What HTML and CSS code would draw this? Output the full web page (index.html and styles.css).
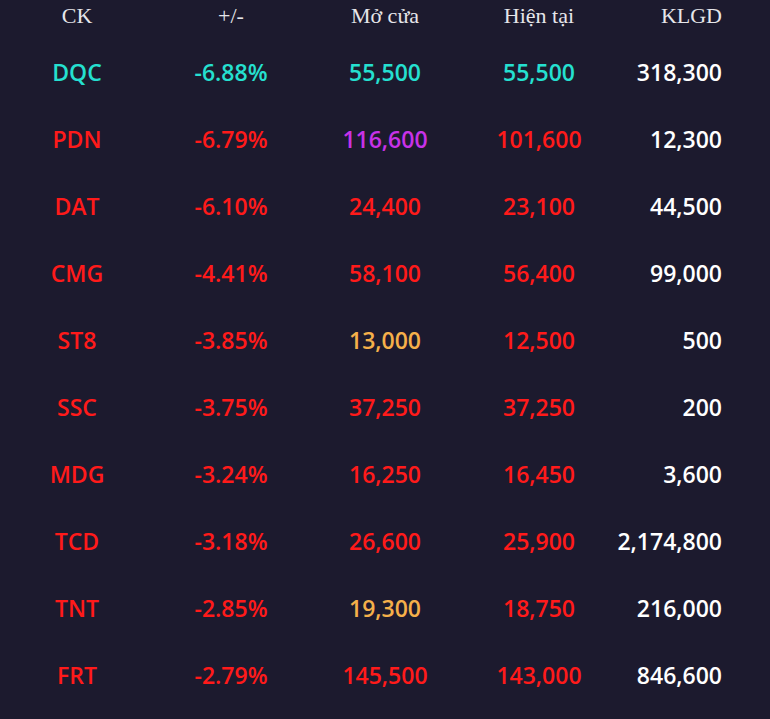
FILE: index.html
```html
<!DOCTYPE html>
<html lang="vi">
<head>
<meta charset="utf-8">
<link rel="stylesheet" href="styles.css">
</head>
<body>
<div class="board">
  <div class="row head">
    <div class="c">CK</div><div class="c">+/-</div><div class="c">Mở cửa</div><div class="c">Hiện tại</div><div class="r">KLGD</div>
  </div>
  <div class="row">
    <div class="c cy">DQC</div><div class="c cy">-6.88%</div><div class="c cy">55,500</div><div class="c cy">55,500</div><div class="r wh">318,300</div>
  </div>
  <div class="row">
    <div class="c rd">PDN</div><div class="c rd">-6.79%</div><div class="c pu">116,600</div><div class="c rd">101,600</div><div class="r wh">12,300</div>
  </div>
  <div class="row">
    <div class="c rd">DAT</div><div class="c rd">-6.10%</div><div class="c rd">24,400</div><div class="c rd">23,100</div><div class="r wh">44,500</div>
  </div>
  <div class="row">
    <div class="c rd">CMG</div><div class="c rd">-4.41%</div><div class="c rd">58,100</div><div class="c rd">56,400</div><div class="r wh">99,000</div>
  </div>
  <div class="row">
    <div class="c rd">ST8</div><div class="c rd">-3.85%</div><div class="c yl">13,000</div><div class="c rd">12,500</div><div class="r wh">500</div>
  </div>
  <div class="row">
    <div class="c rd">SSC</div><div class="c rd">-3.75%</div><div class="c rd">37,250</div><div class="c rd">37,250</div><div class="r wh">200</div>
  </div>
  <div class="row">
    <div class="c rd">MDG</div><div class="c rd">-3.24%</div><div class="c rd">16,250</div><div class="c rd">16,450</div><div class="r wh">3,600</div>
  </div>
  <div class="row">
    <div class="c rd">TCD</div><div class="c rd">-3.18%</div><div class="c rd">26,600</div><div class="c rd">25,900</div><div class="r wh">2,174,800</div>
  </div>
  <div class="row">
    <div class="c rd">TNT</div><div class="c rd">-2.85%</div><div class="c yl">19,300</div><div class="c rd">18,750</div><div class="r wh">216,000</div>
  </div>
  <div class="row">
    <div class="c rd">FRT</div><div class="c rd">-2.79%</div><div class="c rd">145,500</div><div class="c rd">143,000</div><div class="r wh">846,600</div>
  </div>
</div>
</body>
</html>
```
FILE: styles.css
```css
html, body {
  margin: 0;
  padding: 0;
  background: #1c1a2e;
}
body {
  width: 770px;
  height: 719px;
  overflow: hidden;
}
.board {
  display: flex;
  flex-direction: column;
}
.row {
  display: grid;
  grid-template-columns: repeat(5, 154px);
  height: 67px;
  align-items: center;
  font-family: "Open Sans", "Noto Sans", sans-serif;
  font-size: 23px;
  font-weight: 600;
}
.row.head {
  height: 32px;
  margin-bottom: 6px;
  font-family: "Liberation Serif", "Times New Roman", serif;
  font-size: 22px;
  font-weight: 400;
  color: #e6e6ea;
}
.c { text-align: center; }
.r { text-align: right; padding-right: 48px; }
.cy { color: #25e0d0; }
.rd { color: #ff1a1a; }
.pu { color: #c832e8; }
.yl { color: #f5b04a; }
.wh { color: #ffffff; }
```
